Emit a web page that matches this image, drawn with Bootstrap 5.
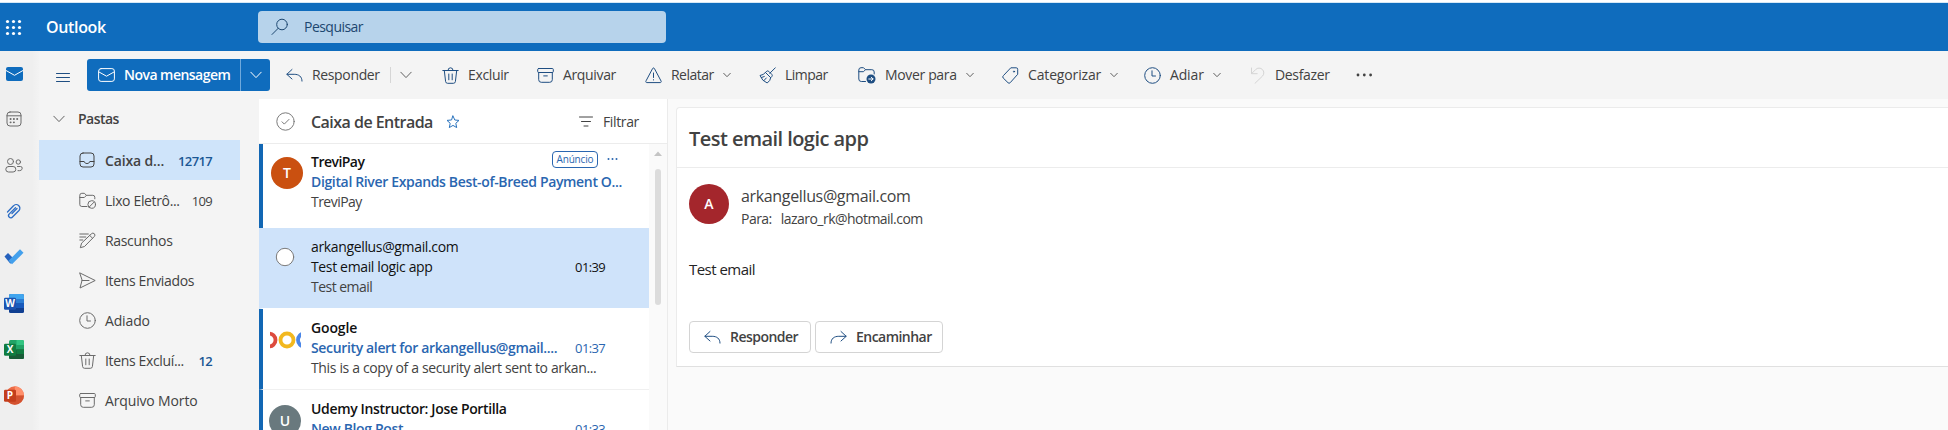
<!DOCTYPE html>
<html lang="pt-BR">
<head>
<meta charset="utf-8">
<title>Outlook</title>
<link href="https://cdn.jsdelivr.net/npm/bootstrap@5.3.0/dist/css/bootstrap.min.css" rel="stylesheet">
<style>
body{font-family:"Open Sans","Noto Sans",sans-serif;font-size:14px;line-height:20px;color:#424242;background:#fff;height:430px;overflow:hidden;letter-spacing:-.35px}
svg{display:block;flex:none;fill:none;stroke:currentColor;stroke-width:1;stroke-linecap:round;stroke-linejoin:round}
svg.solid{fill:currentColor;stroke:none}
.semi{font-weight:600}
.k1{letter-spacing:-.15px}
.k5{letter-spacing:-.53px}
.digits{font-size:13px;letter-spacing:-.65px}
.blue{color:#1b5794}
.navy{color:#1f4e82}
.gray{color:#6b6b6b}
.topbar{height:51px;border-top:2px solid #fff;box-shadow:inset 0 1px #d5e8f6;background:#0f6cbd;padding:1px 0 0 5px}
.brand{font-size:16px;width:212px;margin-left:24px}
.search{width:408px;height:32px;border-radius:4px;background:#b7d3eb;color:#1d4770;padding-left:13px;gap:15px}
.rail{width:39px;background:linear-gradient(90deg,#efefef 32px,#f3f3f3);height:379px;padding-left:4px}
.rail>div{height:46px;width:20px;display:flex;align-items:center;justify-content:center}
.rail>div:first-child{height:45px}
.ribbon{height:48px;background:#f4f4f4;padding-left:17px}
.newmsg{width:183px;height:32px;border-radius:3px;background:#0f6cbd;margin-left:17px;color:#fff}
.newmsg .main-part{width:154px;border-right:1px solid #6fa9dc;padding-left:11px;gap:9px;height:32px}
.cmds{display:grid;grid-template-columns:156px 95px 108px 114px 99px 144px 142px 106px 106px 40px;margin-left:16px;height:32px;align-items:center}
.cmds>div{display:flex;align-items:center;gap:9px;white-space:nowrap}
.chev{color:#616161}
.vr1{width:1px;height:16px;background:#d6d6d6;margin:0 0 0 1px}
.folders{width:220px;background:#f4f4f4;height:331px}
.fhead{height:41px;padding:0 0 2px 14px;gap:13px}
.frow{width:201px;height:40px;padding:1px 28px 0 40px;white-space:nowrap}
.frow svg{color:#6b6b6b;margin:-1px 9px 0 0}
.frow .digits{margin-left:auto}
.frow.sel{background:#cfe4fa}
.frow.sel svg{color:#424242}
.list{width:409px;background:#fff;height:331px;border-right:1px solid #ebebeb;overflow:hidden}
.lhead{height:45px;border-bottom:1px solid #ececec;padding:1px 28px 0 17px}
.lhead h1{font-size:16px;margin:0 0 0 16px;line-height:22px;white-space:nowrap;width:135px;letter-spacing:-.53px}
.msgs{width:390px}
.msg{height:81px;border-left:4px solid #1267b4;border-bottom:1px solid #f0f0f0;padding:9px 0 0 8px;position:relative}
.msg.first{height:84px;border-bottom:0;padding-top:8px}
.msg.current{background:#cfe3fa;border-color:#cfe3fa;border-bottom-color:#fff}
.msg .body{width:309px;white-space:nowrap}
.msg .pic{width:32px;margin-right:8px}
.msg .digits{margin:0 15px 0 auto}
.from{color:#111}
.subj{color:#2a66b0}
.avatar{width:32px;height:32px;border-radius:50%;color:#fff;font-weight:600;display:flex;align-items:center;justify-content:center;letter-spacing:0}
.tag{border:1px solid #2a66b0;border-radius:4px;color:#2a66b0;font-size:10px;height:17px;width:46px;line-height:15px;text-align:center;position:absolute;left:289px;top:7px;letter-spacing:-.15px}
.dots{position:absolute;left:344px;top:13px;color:#2a66b0}
.scroll{width:18px;background:#fafafa;padding:7px 0 0 4px}
.thumb{width:6px;height:136px;border-radius:3px;background:#dcdcdc;margin:13px 0 0 2px}
.reading{background:#fafafa;padding:8px 0 0 8px;height:331px}
.sheet{background:#fff;border:1px solid #ebebeb;border-right:0;border-bottom-color:#e0e0e0;border-radius:4px 0 0 0;height:260px}
.sheet h2{font-size:20px;line-height:26px;margin:0;height:60px;padding:18px 0 0 12px;border-bottom:1px solid #ececec;letter-spacing:-.55px}
.act{height:32px;border:1px solid #d4d4d4;border-radius:4px;background:#fff;padding-left:14px;gap:9px}
</style>
</head>
<body>
<svg width="0" height="0" class="position-absolute">
<symbol id="trash" viewBox="0 0 17 17"><path d="M.8 3.500H16.200M6 3.300a2.500 2.500 0 0 1 5 0M2.300 3.500l1.300 11a2 2 0 0 0 2 1.800h5.800a2 2 0 0 0 2-1.800l1.300-11M6.800 7v5.800M10.200 7v5.800"/></symbol>
<symbol id="archive" viewBox="0 0 17 17"><rect x=".7" y="1.500" width="15.600" height="4" rx="1"/><path d="M1.700 5.500v7.200a2.600 2.600 0 0 0 2.600 2.600h8.400a2.600 2.600 0 0 0 2.600-2.600V5.500M6.700 8.900h3.600"/></symbol>
<symbol id="clock" viewBox="0 0 17 17"><circle cx="8.500" cy="8.500" r="7.800"/><path d="M8 3.800V9h3.500"/></symbol>
<symbol id="reply" viewBox="0 0 17 17"><path d="M6 2.500.8 7.300 6 12M1 7.300h7.200c4.600 0 7.800 2.200 7.800 6.800"/></symbol>
<symbol id="chev" viewBox="0 0 12 12"><path d="M.8 3.200 6 8.600l5.200-5.400"/></symbol>
<symbol id="chevs" viewBox="0 0 8 8"><path d="M.7 2.300 4 5.700l3.300-3.400"/></symbol>
<symbol id="mail" viewBox="0 0 17 14"><rect x=".6" y=".6" width="15.800" height="12.800" rx="2.500"/><path d="M1 4l7.500 4.200L16 4"/></symbol>
</svg>

<header class="topbar d-flex align-items-center text-white">
  <svg class="solid" width="17" height="17" viewBox="0 0 17 17"><circle cx="2.500" cy="2.500" r="1.600"/><circle cx="8.500" cy="2.500" r="1.600"/><circle cx="14.500" cy="2.500" r="1.600"/><circle cx="2.500" cy="8.500" r="1.600"/><circle cx="8.500" cy="8.500" r="1.600"/><circle cx="14.500" cy="8.500" r="1.600"/><circle cx="2.500" cy="14.500" r="1.600"/><circle cx="8.500" cy="14.500" r="1.600"/><circle cx="14.500" cy="14.500" r="1.600"/></svg>
  <div class="brand semi">Outlook</div>
  <div class="search d-flex align-items-center">
    <svg width="18" height="18" viewBox="0 0 18 18"><circle cx="11" cy="6.500" r="5.300"/><path d="M7.200 10.300 1 16.500"/></svg>
    <span class="k5">Pesquisar</span>
  </div>
</header>

<div class="d-flex">
  <nav class="rail">
    <div><svg width="17" height="14" viewBox="0 0 17 14"><rect width="17" height="14" rx="2" fill="#0f6cbd" stroke="none"/><path d="M0 3.500l8.500 4.800L17 3.500" stroke="#fff"/></svg></div>
    <div><svg class="gray" width="16" height="16" viewBox="0 0 16 16"><rect x="1" y="1" width="14" height="14" rx="3"/><path d="M1 4.800h14"/><path d="M4.500 8h.2M7.800 8h.2M11.100 8h.2M4.500 11.300h.2M7.800 11.300h.2" stroke-width="1.800"/></svg></div>
    <div><svg class="gray" width="18" height="16" viewBox="0 0 18 16"><circle cx="5.500" cy="4.500" r="3"/><circle cx="13.300" cy="5" r="2.200"/><rect x=".8" y="9.500" width="10" height="5.500" rx="2.700"/><path d="M12.500 9.500h3a1.700 1.700 0 0 1 1.700 1.700c0 2-1.700 2.700-4.200 2.500"/></svg></div>
    <div><svg width="16" height="16" viewBox="0 0 16 16"><g stroke="#2b6cc4" stroke-width="1.300"><path d="M1.500 9 7.500 2.800a3.600 3.600 0 0 1 5.500 4.700L6.500 14a2.200 2.200 0 0 1-3.400-2.900L9.500 4.700"/><path d="M6 10.500 11 5.500"/></g></svg></div>
    <div><svg class="solid" width="20" height="18" viewBox="0 0 20 18"><path d="M.5 8.500 4 5l6 6-3.600 4.700z" fill="#2561bd"/><path d="M16 1.300 19.500 4.800 8 16.300 4.500 12.800z" fill="#43a0ec"/></svg></div>
    <div><svg class="solid" width="20" height="19" viewBox="0 0 20 19"><rect x="5" width="15" height="19" rx="1.500" fill="#103f91"/><path d="M6.500 0h12A1.500 1.500 0 0 1 20 1.500V5H5V1.500A1.500 1.500 0 0 1 6.500 0z" fill="#41a5ee"/><path d="M5 5h15v4.500H5z" fill="#2b7cd3"/><path d="M5 9.500h15V14H5z" fill="#185abd"/><rect y="3.700" width="12" height="12" rx="1.200" fill="#1c53b0"/><text x="6" y="13.200" font-size="10" font-weight="700" text-anchor="middle" fill="#fff" letter-spacing="0">W</text></svg></div>
    <div><svg class="solid" width="20" height="19" viewBox="0 0 20 19"><rect x="5" width="15" height="19" rx="1.500" fill="#21a366"/><path d="M12.500 0h6A1.500 1.500 0 0 1 20 1.500V5h-7.500z" fill="#33c481"/><path d="M5 9.500h15v8a1.500 1.500 0 0 1-1.500 1.500h-12A1.500 1.500 0 0 1 5 17.500z" fill="#185c37"/><path d="M12.500 9.500H20V14h-7.500z" fill="#107c41"/><rect y="3.700" width="12" height="12" rx="1.200" fill="#107c41"/><text x="6" y="13.200" font-size="10" font-weight="700" text-anchor="middle" fill="#fff" letter-spacing="0">X</text></svg></div>
    <div><svg class="solid" width="20" height="19" viewBox="0 0 20 19"><circle cx="10.800" cy="9.500" r="9.200" fill="#ed6c47"/><path d="M10.800.3A9.200 9.200 0 0 1 20 9.500h-9.200z" fill="#ff8f6b"/><path d="M1.600 9.500H20a9.200 9.200 0 0 1-18.400 0z" fill="#d35230"/><rect y="3.700" width="12" height="12" rx="1.200" fill="#c43e1c"/><text x="6" y="13.200" font-size="10" font-weight="700" text-anchor="middle" fill="#fff" letter-spacing="0">P</text></svg></div>
  </nav>

  <div class="flex-grow-1">
    <div class="ribbon d-flex align-items-center">
      <svg width="14" height="11" viewBox="0 0 14 11" class="navy mt-1"><path d="M.5 1.500h13M.5 5.500h13M.5 9.500h13"/></svg>
      <div class="newmsg d-flex align-items-center">
        <div class="main-part d-flex align-items-center semi"><svg width="17" height="14"><use href="#mail"/></svg><span class="k5">Nova mensagem</span></div>
        <svg width="12" height="12" class="mx-auto"><use href="#chev"/></svg>
      </div>
      <div class="cmds">
        <div><svg class="navy" width="17" height="17"><use href="#reply"/></svg><span>Responder</span><i class="vr1"></i><svg class="chev" width="12" height="12"><use href="#chev"/></svg></div>
        <div><svg class="navy" width="17" height="17"><use href="#trash"/></svg><span>Excluir</span></div>
        <div><svg class="navy" width="17" height="17"><use href="#archive"/></svg><span>Arquivar</span></div>
        <div><svg class="navy" width="17" height="17" viewBox="0 0 17 17"><path d="M7.600 1.500a1 1 0 0 1 1.800 0l6.700 12.600a1 1 0 0 1-.9 1.500H1.800a1 1 0 0 1-.9-1.500zM8.500 6v4.500M8.500 12.700v.3"/></svg><span class="k5">Relatar</span><svg class="chev" width="8" height="8"><use href="#chevs"/></svg></div>
        <div><svg class="navy" width="17" height="17" viewBox="0 0 17 17"><path d="M16.300.8 10.800 6.300M6.500 5.500l5.200 5.200M6.500 5.500 7.800 4.200q1-.8 2 .2l3 3q.9 1 .1 2l-1.200 1.300q-.3 3-3.500 5.300Q3 14 1 8.500 4.500 8 6.500 5.500M5 13.500 7.300 11M2.500 10.500l2.800-1"/></svg><span class="k5">Limpar</span></div>
        <div><svg class="navy" width="18" height="18" viewBox="0 0 18 18"><path d="M7.500 15.500H3.300A2.500 2.500 0 0 1 .8 13V4A2.300 2.300 0 0 1 3 1.700h2.500L7.500 3.700h6.300A2.300 2.300 0 0 1 16.200 6v2M.8 5.700h4.700l2-2"/><circle cx="13" cy="13" r="4.500" fill="#1f4e82" stroke="none"/><path d="M10.800 13h4.200M13.300 11.200 15.100 13l-1.800 1.800" stroke="#fff"/></svg><span>Mover para</span><svg class="chev" width="8" height="8"><use href="#chevs"/></svg></div>
        <div><svg class="navy" width="17" height="17" viewBox="0 0 17 17"><path d="M9.200.8h5a1.500 1.500 0 0 1 1.500 1.500v5L8.200 15.700a1.500 1.500 0 0 1-2.200 0L1.200 11a1.500 1.500 0 0 1 0-2.200z"/><circle cx="12" cy="4.600" r=".6"/></svg><span class="k1">Categorizar</span><svg class="chev" width="8" height="8"><use href="#chevs"/></svg></div>
        <div><svg class="navy" width="17" height="17"><use href="#clock"/></svg><span class="k1">Adiar</span><svg class="chev" width="8" height="8"><use href="#chevs"/></svg></div>
        <div><svg style="color:#d4d4d4" width="16" height="17" viewBox="0 0 16 17"><path d="M1.500 1v5.700h5.700M1.700 6.500 5.700 2.500a4.700 4.700 0 0 1 6.700 6.700L5 16.300"/></svg><span>Desfazer</span></div>
        <div><svg class="solid" width="17" height="4" viewBox="0 0 17 4"><circle cx="2" cy="2" r="1.400"/><circle cx="8.300" cy="2" r="1.400"/><circle cx="14.600" cy="2" r="1.400"/></svg></div>
      </div>
    </div>

    <div class="d-flex">
      <nav class="folders">
        <div class="fhead d-flex align-items-center semi"><svg class="chev" width="12" height="12"><use href="#chev"/></svg><span class="k5">Pastas</span></div>
        <div class="frow sel d-flex align-items-center semi"><svg width="17" height="17" viewBox="0 0 17 17"><rect x="1" y="1" width="14" height="14" rx="3"/><path d="M1 9.500h4.200c.5 2.700 5.100 2.700 5.600 0H15"/></svg><span class="k1">Caixa d...</span><span class="digits blue">12717</span></div>
        <div class="frow d-flex align-items-center"><svg width="17" height="17" viewBox="0 0 17 17"><path d="M8 14.500H2.800A2 2 0 0 1 .8 12.500V3.300a2 2 0 0 1 2-2h2.500L7.500 3.300h6.300a2 2 0 0 1 2 2v1.500M.8 5.500h4.500l2.200-2.200"/><circle cx="12.700" cy="12.500" r="3.800"/><path d="M10.200 15 15.200 10"/></svg><span>Lixo Eletrô...</span><span class="digits">109</span></div>
        <div class="frow d-flex align-items-center"><svg width="17" height="17" viewBox="0 0 17 17"><path d="M.8 2h8.500M.8 5h6M.8 8h3M12.500 1.700a1.900 1.900 0 0 1 2.800 2.800L5.500 14.500 1.300 15.700 2.500 11.500zM10.800 3.500l2.800 2.800"/></svg><span>Rascunhos</span></div>
        <div class="frow d-flex align-items-center"><svg width="17" height="17" viewBox="0 0 17 17"><path d="M1 1 16.200 8.500 1 16 3 8.500zM3 8.500h7"/></svg><span>Itens Enviados</span></div>
        <div class="frow d-flex align-items-center"><svg width="17" height="17"><use href="#clock"/></svg><span class="k1">Adiado</span></div>
        <div class="frow d-flex align-items-center"><svg width="17" height="17"><use href="#trash"/></svg><span>Itens Excluí...</span><span class="digits blue semi">12</span></div>
        <div class="frow d-flex align-items-center"><svg width="17" height="17"><use href="#archive"/></svg><span class="k1">Arquivo Morto</span></div>
      </nav>

      <section class="list">
        <div class="lhead d-flex align-items-center">
          <svg width="19" height="19" viewBox="0 0 19 19" style="color:#7a7a7a"><circle cx="9.500" cy="9.500" r="8.700"/><path d="M6 9.800l2.300 2.300 4.700-4.700"/></svg>
          <h1 class="semi">Caixa de Entrada</h1>
          <svg width="14" height="14" viewBox="0 0 14 14" style="color:#2a73bd"><path d="M7 1l1.800 4 4.200.4-3.200 2.900.9 4.300L7 10.400l-3.700 2.200.9-4.300L1 5.400 5.200 5z"/></svg>
          <svg width="14" height="11" viewBox="0 0 14 11" class="ms-auto"><path d="M.5 1h13M2.500 5.500h9M5 10h4"/></svg>
          <span style="margin-left:10px">Filtrar</span>
        </div>
        <div class="d-flex">
          <div class="msgs">
            <article class="msg first d-flex">
              <div class="pic"><div class="avatar" style="background:#ca5010;margin-top:5px">T</div></div>
              <div class="body"><div class="from semi k5">TreviPay</div><div class="subj semi">Digital River Expands Best-of-Breed Payment O...</div><div class="k5">TreviPay</div></div>
              <span class="tag">Anúncio</span>
              <svg class="dots solid" width="11" height="4" viewBox="0 0 11 4"><circle cx="1.500" cy="2" r="1"/><circle cx="5.500" cy="2" r="1"/><circle cx="9.500" cy="2" r="1"/></svg>
            </article>
            <article class="msg current d-flex">
              <div class="pic"><svg width="20" height="20" viewBox="0 0 20 20" style="color:#7a7a7a;margin:10px 0 0 4px"><circle cx="10" cy="10" r="8.700" fill="#fff"/></svg></div>
              <div class="body"><div class="from">arkangellus@gmail.com</div><div class="from d-flex"><span>Test email logic app</span><span class="digits">01:39</span></div><div class="k5">Test email</div></div>
            </article>
            <article class="msg d-flex">
              <div class="pic"><svg width="31" height="31" viewBox="0 0 31 31" style="margin:6px 0 0 -1px"><g stroke-width="3.800"><circle cx="-1" cy="16" r="6.500" stroke="#dd4b3e"/><circle cx="17" cy="16" r="6.500" stroke="#f2b81f"/><circle cx="34.500" cy="16" r="6.500" stroke="#4a86e8"/></g></svg></div>
              <div class="body"><div class="from semi k1">Google</div><div class="subj d-flex"><span class="semi">Security alert for arkangellus@gmail....</span><span class="digits">01:37</span></div><div>This is a copy of a security alert sent to arkan...</div></div>
            </article>
            <article class="msg d-flex">
              <div class="pic"><div class="avatar" style="background:#69797e;margin:6px 0 0 -2px">U</div></div>
              <div class="body"><div class="from semi">Udemy Instructor: Jose Portilla</div><div class="subj d-flex"><span class="semi">New Blog Post</span><span class="digits">01:33</span></div></div>
            </article>
          </div>
          <div class="scroll"><svg class="solid" width="10" height="5" viewBox="0 0 10 5" style="color:#c4c4c4"><path d="M1 5 5 .5 9 5z"/></svg><div class="thumb"></div></div>
        </div>
      </section>

      <main class="reading flex-grow-1">
        <div class="sheet">
          <h2 class="semi">Test email logic app</h2>
          <div style="padding:16px 0 0 12px">
            <div class="d-flex">
              <div class="avatar" style="width:40px;height:40px;background:#a4262c">A</div>
              <div style="margin-left:12px"><div style="font-size:16px;line-height:24px">arkangellus@gmail.com</div><div class="d-flex k5" style="padding-top:1px">Para:<span style="margin-left:9px">lazaro_rk@hotmail.com</span></div></div>
            </div>
            <div class="k5" style="font-size:15px;color:#242424;margin-top:30px">Test email</div>
            <div class="d-flex semi k5" style="gap:4px;margin-top:42px">
              <div class="act d-flex align-items-center" style="width:122px"><svg width="17" height="17" class="navy"><use href="#reply"/></svg>Responder</div>
              <div class="act d-flex align-items-center" style="width:128px"><svg width="17" height="17" class="navy" style="transform:scaleX(-1)"><use href="#reply"/></svg>Encaminhar</div>
            </div>
          </div>
        </div>
      </main>
    </div>
  </div>
</div>
<script src="https://cdn.jsdelivr.net/npm/bootstrap@5.3.0/dist/js/bootstrap.bundle.min.js"></script>
</body>
</html>
